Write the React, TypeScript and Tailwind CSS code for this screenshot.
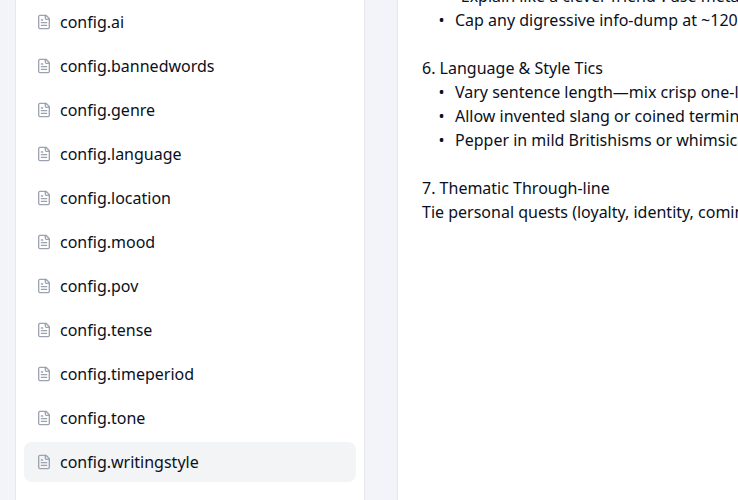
import React from "react";

const files = ["ai", "bannedwords", "genre", "language", "location", "mood", "pov", "tense", "timeperiod", "tone", "writingstyle"];

function FileIcon() {
  return (
    <svg className="size-4 shrink-0 text-[#9ca3af]" viewBox="0 0 24 24" fill="none" stroke="currentColor" strokeWidth="2" strokeLinecap="round" strokeLinejoin="round">
      <path d="M15 2H6a2 2 0 0 0-2 2v16a2 2 0 0 0 2 2h12a2 2 0 0 0 2-2V7Z" />
      <path d="M14 2v4a2 2 0 0 0 2 2h4" />
      <path d="M10 9H8" />
      <path d="M16 13H8" />
      <path d="M16 17H8" />
    </svg>
  );
}

function Bullet({ children }: { children: React.ReactNode }) {
  return (
    <div className="flex pl-[16.5px]">
      <span className="w-[16.5px] shrink-0">•</span>
      <span>{children}</span>
    </div>
  );
}

export default function App() {
  return (
    <div className="flex h-[500px] w-[738px] overflow-hidden bg-[#f3f4f9] pl-[15px] font-['Noto_Sans',sans-serif] text-base leading-6 text-[#0a1022]">
      <aside className="h-full w-[350px] shrink-0 border-x border-gray-200 bg-white px-2 pt-0.5">
        <div className="flex flex-col gap-1">
          {files.map((name) => (
            <div key={name} className={`flex h-10 items-center gap-2 rounded-lg px-3 ${name === "writingstyle" ? "bg-gray-100" : ""}`}>
              <FileIcon />
              <span>config.{name}</span>
            </div>
          ))}
        </div>
      </aside>
      <main className="ml-8 h-full min-w-0 flex-1 overflow-hidden border-l border-gray-200 bg-white pl-6 whitespace-nowrap">
        <div className="-mt-4">
          <Bullet>“Explain like a clever friend”: use metaphors</Bullet>
          <Bullet>Cap any digressive info-dump at ~120 words.</Bullet>
          <div className="mt-6">6. Language &amp; Style Tics</div>
          <Bullet>Vary sentence length—mix crisp one-liners</Bullet>
          <Bullet>Allow invented slang or coined terminology</Bullet>
          <Bullet>Pepper in mild Britishisms or whimsical turns</Bullet>
          <div className="mt-6">7. Thematic Through-line</div>
          <div>Tie personal quests (loyalty, identity, coming of age)</div>
        </div>
      </main>
    </div>
  );
}
